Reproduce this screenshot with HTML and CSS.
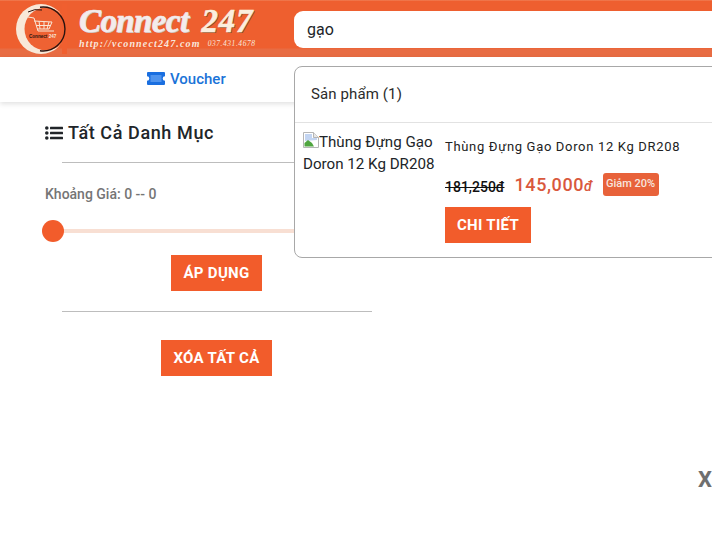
FILE: index.html
```html
<!DOCTYPE html>
<html lang="vi">
<head>
<meta charset="utf-8">
<title>Connect 247</title>
<link rel="stylesheet" href="styles.css">
</head>
<body>
<header class="topbar">
  <div class="logo">
    <svg class="logo-mark" width="51" height="50" viewBox="0 0 51 50">
      <circle cx="25" cy="25" r="25" fill="#f8e8d8"/>
      <circle cx="30" cy="25" r="21.5" fill="#ee6233"/>
      <rect x="46" y="0" width="5" height="50" fill="#f05f2f"/>
      <path d="M24 3.2 A22 22 0 1 1 24 46.8" fill="none" stroke="#2a1410" stroke-width="1.4"/>
      <path d="M12 8 A20 20 0 0 1 26 6" fill="none" stroke="#2a1410" stroke-width="1"/>
      <path d="M12 13 L18 14 L22 27 L38 27 M18 17 L36 18 L33 25 L21 25 M23 17 L24 25 M28 18 L28 25 M33 18 L31 25 M20 21.5 L35 21.5" fill="none" stroke="#f8e8d8" stroke-width="1"/>
      <text x="13" y="34" class="logo-mini">Connect <tspan fill="#f8e8d8">247</tspan></text>
    </svg>
    <div class="logo-copy">
      <div class="logo-name"><span>Connect</span><span class="logo-num">247</span></div>
      <div class="logo-sub"><span>http://vconnect247.com</span><span class="logo-phone">037.431.4678</span></div>
    </div>
  </div>
  <div class="search"><span class="search-value">gạo</span></div>
</header>

<nav class="navbar">
  <a class="voucher">
    <svg width="18" height="13" viewBox="0 0 18 13"><path fill="#1a6fe0" d="M1 0H17A1 1 0 0 1 18 1V4.2A2.3 2.3 0 0 0 18 8.8V12A1 1 0 0 1 17 13H1A1 1 0 0 1 0 12V8.8A2.3 2.3 0 0 0 0 4.2V1A1 1 0 0 1 1 0Z"/><rect x="3.5" y="3" width="11" height="7" fill="#4f94ee"/></svg>
    Voucher
  </a>
</nav>

<main class="sidebar">
  <h2 class="side-title">
    <svg width="18" height="14" viewBox="0 0 18 14"><g fill="#212529"><circle cx="1.8" cy="2" r="1.8"/><circle cx="1.8" cy="7" r="1.8"/><circle cx="1.8" cy="12" r="1.8"/><rect x="5" y=".8" width="13" height="2.4" rx=".5"/><rect x="5" y="5.8" width="13" height="2.4" rx=".5"/><rect x="5" y="10.8" width="13" height="2.4" rx=".5"/></g></svg>
    Tất Cả Danh Mục
  </h2>
  <hr class="rule rule-first">
  <p class="price-label">Khoảng Giá: 0 -- 0</p>
  <div class="slider"><span class="knob"></span></div>
  <div class="center apply-row"><button class="btn">ÁP DỤNG</button></div>
  <hr class="rule rule-second">
  <div class="center clear-row"><button class="btn">XÓA TẤT CẢ</button></div>
</main>

<section class="results">
  <div class="results-head">Sản phẩm (1)</div>
  <article class="product">
    <div class="alt-text">
      <svg class="broken" width="16" height="16" viewBox="0 0 16 16"><path d="M.5.5H10.5L15.5 5.5V15.5H.5Z" fill="#fff" stroke="#b5b5b5"/><path d="M10.5.5V5.5H15.5" fill="#e8e8e8" stroke="#b5b5b5"/><path d="M2 2H9V6H14V8L2 9Z" fill="#c3d5f2"/><path d="M1.5 14.5V11L5 8L9 11L11 14.5Z" fill="#4fa53f"/></svg>Thùng Đựng Gạo Doron 12 Kg DR208
    </div>
    <div class="info">
      <div class="name">Thùng Đựng Gạo Doron 12 Kg DR208</div>
      <div class="prices">
        <s class="old">181,250đ</s>
        <span class="new">145,000<i class="cur">đ</i></span>
        <span class="badge">Giảm 20%</span>
      </div>
      <button class="btn detail">CHI TIẾT</button>
    </div>
  </article>
</section>

<div class="close-x">X</div>
</body>
</html>
```
FILE: styles.css
```css
* { box-sizing: border-box; }
html, body { margin: 0; height: 538px; overflow: hidden; background: #fff; }
body { position: relative; font-family: Roboto, "Noto Sans", sans-serif; color: #212529; }

.topbar {
  height: 57px;
  background: linear-gradient(#f08a62 0, #ee5f2f 1px, #ee5f2f 48px, #e86c43 49px);
  display: flex;
  padding: 11px 0 9px 16px;
}
.logo { width: 278px; display: flex; margin-top: -7px; gap: 12px; flex: none; }
.logo-mark { flex: none; }
.logo-mini { font: 700 4.6px "Liberation Sans", sans-serif; fill: #2a1410; }
.logo-copy { padding-top: 1px; }
.logo-name {
  font: italic 700 33px/33px "Liberation Serif", serif;
  letter-spacing: -.6px;
  color: #f3ecec;
  white-space: nowrap;
  -webkit-text-stroke: .6px #f3ecec;
  text-shadow: 1px 1px 0 #c9b9b4;
}
.logo-num { margin-left: 13px; letter-spacing: .8px; color: #fbeede; -webkit-text-stroke: .6px #fbeede; text-shadow: 1px 1px 0 #8a4a2a; }
.logo-sub {
  font: italic 700 10px/11px "Liberation Serif", serif;
  letter-spacing: 1.15px;
  color: #f8e6dc;
  white-space: nowrap;
  display: flex;
  gap: 7px;
}
.logo-phone { font-size: 7.5px; letter-spacing: .55px; font-weight: 400; }
.search {
  flex: 1;
  background: #fff;
  border-radius: 9px 0 0 9px;
  padding: 0 13px;
  font-size: 16px;
  line-height: 37px;
  color: #212529;
}

.navbar {
  height: 45px;
  box-shadow: 0 2px 5px rgba(0, 0, 0, .12);
  padding: 0 0 2px 147px;
  display: flex;
  align-items: center;
}
.voucher {
  display: flex;
  align-items: center;
  gap: 5px;
  color: #1a73d8;
  font-size: 15px;
  font-weight: 500;
}

.sidebar { width: 372px; padding-left: 45px; }
.side-title {
  margin: 20px 0 0;
  font-size: 18px;
  font-weight: 500;
  line-height: 22px;
  letter-spacing: .6px;
  display: flex;
  align-items: center;
  gap: 5px;
}
.rule { border: 0; border-top: 1px solid #bdbdbd; margin: 0 0 0 17px; }
.rule-first { margin-top: 18px; }
.price-label {
  margin: 23px 0 0;
  font-size: 14px;
  font-weight: 500;
  line-height: 17px;
  color: #757575;
}
.slider {
  position: relative;
  height: 4px;
  margin: 26px 0 0;
  background: #f8dfd3;
  border-radius: 2px;
}
.knob {
  position: absolute;
  left: -3px;
  top: -9px;
  width: 22px;
  height: 22px;
  border-radius: 50%;
  background: #f25c2b;
}
.center { display: flex; justify-content: center; padding-left: 16px; }
.apply-row { margin-top: 22px; }
.clear-row { margin-top: 28px; }
.rule-second { margin-top: 20px; }
.btn {
  height: 36px;
  padding: 0 12px;
  border: 0;
  background: #f25c2b;
  color: #fff;
  font: 700 15px/36px Roboto, sans-serif;
  letter-spacing: .3px;
}

.results {
  position: absolute;
  left: 294px;
  top: 66px;
  width: 440px;
  height: 192px;
  background: #fff;
  border: 1px solid #a8a8a8;
  border-radius: 8px;
}
.results-head {
  height: 56px;
  padding-left: 16px;
  font-size: 15px;
  line-height: 55px;
  letter-spacing: .12px;
  color: #2b2b2b;
  border-bottom: 1px solid #e2e2e2;
}
.product { display: flex; padding: 8px 0 0 8px; }
.alt-text {
  width: 142px;
  flex: none;
  font-size: 15.15px;
  line-height: 22px;
}
.broken { vertical-align: -1px; }
.info { padding-top: 8px; }
.name {
  font-size: 13px;
  line-height: 16px;
  letter-spacing: .67px;
  color: #222;
}
.prices { display: flex; margin-top: 11px; height: 41px; }
.old {
  font-size: 14px;
  font-weight: 500;
  line-height: 18px;
  margin-top: 12px;
  color: #111;
}
.new {
  margin-left: 10px;
  width: 78px;
  font-size: 18px;
  font-weight: 500;
  line-height: 24px;
  letter-spacing: .6px;
  color: #d9583d;
  margin-top: 7px;
}
.cur { font-size: 14px; }
.badge {
  margin: 7px 0 0 10px;
  width: 56px;
  height: 23px;
  background: #e8623a;
  color: #f7e6df;
  border-radius: 3px;
  font-size: 11px;
  font-weight: 500;
  line-height: 22px;
  text-align: center;
}
.detail { display: block; padding: 0 12px; width: 86px; white-space: nowrap; }

.close-x {
  position: absolute;
  left: 698px;
  top: 467px;
  font-size: 22px;
  font-weight: 700;
  line-height: 26px;
  color: #6f6f6f;
}
```
